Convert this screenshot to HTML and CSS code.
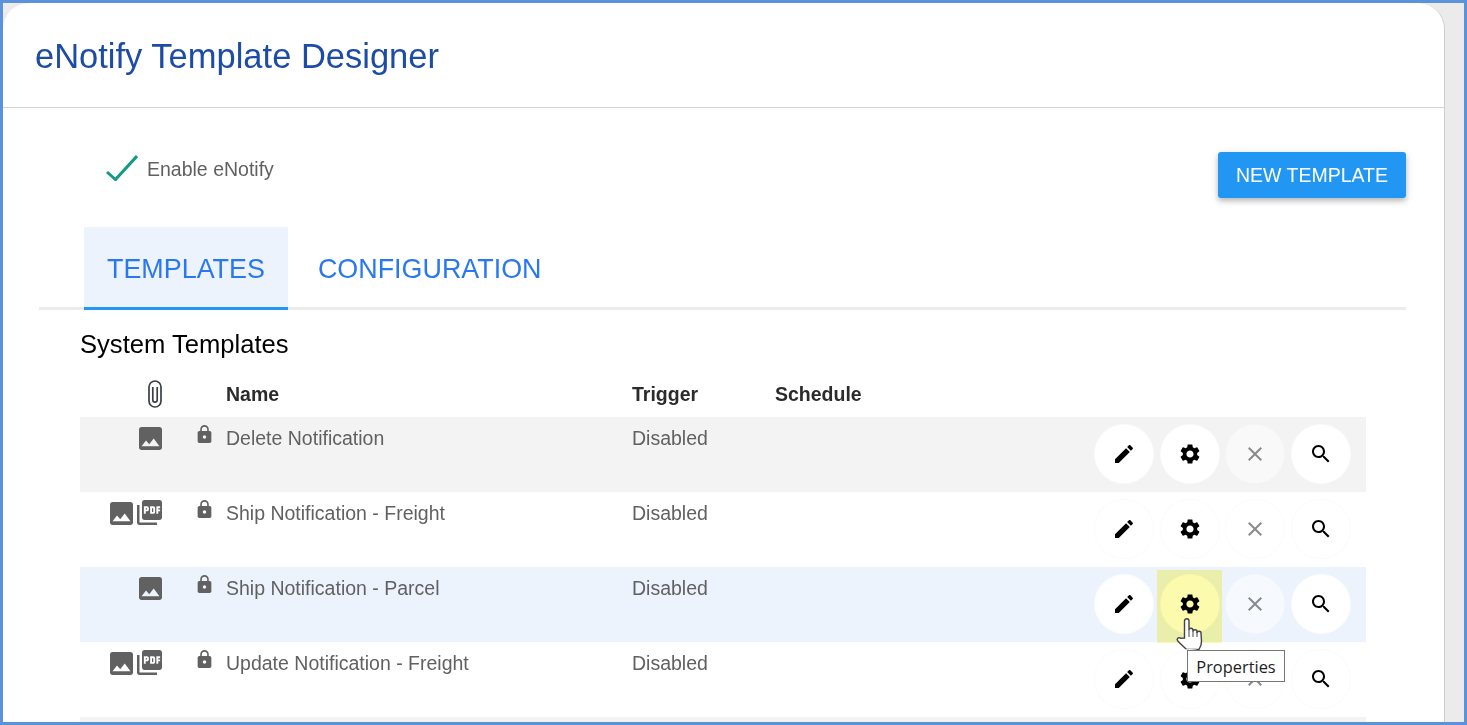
FILE: index.html
```html
<!DOCTYPE html>
<html lang="en">
<head>
    <meta charset="UTF-8">
    <meta name="viewport" content="width=device-width, initial-scale=1.0">
    <title>eNotify Template Designer</title>
    <link rel="stylesheet" href="styles.css">
</head>
<body>
    <svg class="icon-defs" aria-hidden="true">
        <symbol id="i-edit" viewBox="0 0 24 24"><path d="M3 17.25V21h3.75L17.81 9.94l-3.75-3.75L3 17.25zM20.71 7.04c.39-.39.39-1.02 0-1.41l-2.34-2.34c-.39-.39-1.02-.39-1.41 0l-1.83 1.83 3.75 3.75 1.83-1.83z"/></symbol>
        <symbol id="i-gear" viewBox="0 0 24 24"><path d="M19.14 12.94c.04-.3.06-.61.06-.94 0-.32-.02-.64-.07-.94l2.03-1.58c.18-.14.23-.41.12-.61l-1.92-3.32c-.12-.22-.37-.29-.59-.22l-2.39.96c-.5-.38-1.03-.7-1.62-.94l-.36-2.54c-.04-.24-.24-.41-.48-.41h-3.84c-.24 0-.43.17-.47.41l-.36 2.54c-.59.24-1.13.57-1.62.94l-2.39-.96c-.22-.08-.47 0-.59.22L2.74 8.87c-.12.21-.08.47.12.61l2.03 1.58c-.05.3-.09.63-.09.94s.02.64.07.94l-2.03 1.58c-.18.14-.23.41-.12.61l1.92 3.32c.12.22.37.29.59.22l2.39-.96c.5.38 1.03.7 1.62.94l.36 2.54c.05.24.24.41.48.41h3.84c.24 0 .44-.17.47-.41l.36-2.54c.59-.24 1.13-.56 1.62-.94l2.39.96c.22.08.47 0 .59-.22l1.92-3.32c.12-.22.07-.47-.12-.61l-2.01-1.58zM12 15.6c-1.98 0-3.6-1.62-3.6-3.6s1.62-3.6 3.6-3.6 3.6 1.62 3.6 3.6-1.62 3.6-3.6 3.6z"/></symbol>
        <symbol id="i-close" viewBox="0 0 24 24"><path d="M19 6.41L17.59 5 12 10.59 6.41 5 5 6.41 10.59 12 5 17.59 6.41 19 12 13.41 17.59 19 19 17.59 13.41 12z"/></symbol>
        <symbol id="i-search" viewBox="0 0 24 24"><path d="M15.5 14h-.79l-.28-.27C15.41 12.59 16 11.11 16 9.5 16 5.91 13.09 3 9.5 3S3 5.91 3 9.5 5.91 16 9.5 16c1.61 0 3.09-.59 4.23-1.57l.27.28v.79l5 4.99L20.49 19l-4.99-5zm-6 0C7.01 14 5 11.99 5 9.5S7.01 5 9.5 5 14 7.01 14 9.5 11.99 14 9.5 14z"/></symbol>
        <symbol id="i-image" viewBox="3 3 18 18"><path d="M21 19V5c0-1.1-.9-2-2-2H5c-1.1 0-2 .9-2 2v14c0 1.1.9 2 2 2h14c1.1 0 2-.9 2-2zM8.5 13.5l2.5 3.01L14.5 12l4.5 6H5l3.5-4.5z"/></symbol>
        <symbol id="i-pdf" viewBox="2 2 20 20"><path d="M20 2H8c-1.1 0-2 .9-2 2v12c0 1.1.9 2 2 2h12c1.1 0 2-.9 2-2V4c0-1.1-.9-2-2-2zm-8.5 7.5c0 .83-.67 1.5-1.5 1.5H9v2H7.5V7H10c.83 0 1.5.67 1.5 1.5v1zm5 2c0 .83-.67 1.5-1.5 1.5h-2.5V7H15c.83 0 1.5.67 1.5 1.5v3zm4-3H19v1h1.5V11H19v2h-1.5V7h3v1.5zM9 9.5h1v-1H9v1zM4 6H2v14c0 1.1.9 2 2 2h14v-2H4V6zm10 5.5h1v-3h-1v3z"/></symbol>
        <symbol id="i-lock" viewBox="4 1 16 21"><path d="M18 8h-1V6c0-2.76-2.24-5-5-5S7 3.24 7 6v2H6c-1.1 0-2 .9-2 2v10c0 1.1.9 2 2 2h12c1.1 0 2-.9 2-2V10c0-1.1-.9-2-2-2zm-6 9c-1.1 0-2-.9-2-2s.9-2 2-2 2 .9 2 2-.9 2-2 2zm3.1-9H8.9V6c0-1.71 1.39-3.1 3.1-3.1 1.71 0 3.1 1.39 3.1 3.1v2z"/></symbol>
    </svg>

    <div class="frame">
        <div class="card">
            <header class="card-header">
                <h1>eNotify Template Designer</h1>
            </header>

            <main class="card-body">
                <div class="top-row">
                    <div class="enable">
                        <svg class="check" viewBox="0 0 32 26"><path d="M1 17l8.500 7.500L31 1"/></svg>
                        <span>Enable eNotify</span>
                    </div>
                    <button class="new-btn">NEW TEMPLATE</button>
                </div>

                <nav class="tabs">
                    <a class="tab active">TEMPLATES</a>
                    <a class="tab">CONFIGURATION</a>
                </nav>

                <section class="templates">
                    <h2>System Templates</h2>

                    <div class="row head">
                        <div class="files">
                            <svg class="clip" viewBox="0 0 14 28"><path d="M1 7a6 6 0 0 1 12 0v14a6 6 0 0 1-12 0zM4.800 7v13a2.200 2.200 0 0 0 4.400 0V7"/></svg>
                        </div>
                        <div></div>
                        <div>Name</div>
                        <div>Trigger</div>
                        <div>Schedule</div>
                    </div>

                    <div class="row shaded">
                        <div class="files"><svg class="ic-image"><use href="#i-image"/></svg></div>
                        <div><svg class="ic-lock"><use href="#i-lock"/></svg></div>
                        <div>Delete Notification</div>
                        <div>Disabled</div>
                        <div></div>
                        <div class="actions">
                            <button class="act"><svg><use href="#i-edit"/></svg></button>
                            <button class="act"><svg><use href="#i-gear"/></svg></button>
                            <button class="act off"><svg><use href="#i-close"/></svg></button>
                            <button class="act"><svg><use href="#i-search"/></svg></button>
                        </div>
                    </div>

                    <div class="row">
                        <div class="files"><svg class="ic-image"><use href="#i-image"/></svg><svg class="ic-pdf"><use href="#i-pdf"/></svg></div>
                        <div><svg class="ic-lock"><use href="#i-lock"/></svg></div>
                        <div>Ship Notification - Freight</div>
                        <div>Disabled</div>
                        <div></div>
                        <div class="actions">
                            <button class="act"><svg><use href="#i-edit"/></svg></button>
                            <button class="act"><svg><use href="#i-gear"/></svg></button>
                            <button class="act off"><svg><use href="#i-close"/></svg></button>
                            <button class="act"><svg><use href="#i-search"/></svg></button>
                        </div>
                    </div>

                    <div class="row hover">
                        <div class="files"><svg class="ic-image"><use href="#i-image"/></svg></div>
                        <div><svg class="ic-lock"><use href="#i-lock"/></svg></div>
                        <div>Ship Notification - Parcel</div>
                        <div>Disabled</div>
                        <div></div>
                        <div class="actions">
                            <button class="act"><svg><use href="#i-edit"/></svg></button>
                            <button class="act marked">
                                <svg><use href="#i-gear"/></svg>
                                <span class="marker"></span>
                                <svg class="hand" viewBox="0 0 26 33">
                                    <path d="M8.500 20V3c0-3 4.500-3 4.500 0v9c0-2.400 4-2.400 4 .5v1c0-2.400 4-2.400 4 0V15c0-2.300 4-2.300 4 0l.5 8c.2 3.500-1 6-2.500 8.500H10.500C8 29 4.500 26 1.800 23c-1.800-2 .6-4.300 2.900-2.800z"/>
                                    <path class="hand-line" d="M13 12v7M17 13v6M21 14v5"/>
                                </svg>
                                <span class="tooltip">Properties</span>
                            </button>
                            <button class="act off"><svg><use href="#i-close"/></svg></button>
                            <button class="act"><svg><use href="#i-search"/></svg></button>
                        </div>
                    </div>

                    <div class="row">
                        <div class="files"><svg class="ic-image"><use href="#i-image"/></svg><svg class="ic-pdf"><use href="#i-pdf"/></svg></div>
                        <div><svg class="ic-lock"><use href="#i-lock"/></svg></div>
                        <div>Update Notification - Freight</div>
                        <div>Disabled</div>
                        <div></div>
                        <div class="actions">
                            <button class="act"><svg><use href="#i-edit"/></svg></button>
                            <button class="act"><svg><use href="#i-gear"/></svg></button>
                            <button class="act off"><svg><use href="#i-close"/></svg></button>
                            <button class="act"><svg><use href="#i-search"/></svg></button>
                        </div>
                    </div>

                    <div class="row shaded"></div>
                </section>
            </main>
        </div>
    </div>
</body>
</html>
```

FILE: styles.css
```css
* {
    box-sizing: border-box;
}

body {
    margin: 0;
    height: 725px;
    overflow: hidden;
    font-family: "Liberation Sans", Arial, Helvetica, sans-serif;
}

.icon-defs {
    display: none;
}

.frame {
    height: 725px;
    border: 3px solid #5a93dc;
    background-color: #ebebeb;
    overflow: hidden;
    padding-right: 19px;
}

.card {
    min-height: 800px;
    background-color: #fff;
    border-right: 1px solid #cfcfcf;
    border-radius: 26px 26px 0 0;
}

.card-header {
    height: 105px;
    padding: 31px 32px 0;
    border-bottom: 1px solid #d4d4d4;
}

h1 {
    margin: 0;
    font-size: 34.500px;
    line-height: 44px;
    font-weight: 400;
    color: #1c4ca6;
}

.card-body {
    padding: 0 38px 0 36px;
}

.top-row {
    display: flex;
    justify-content: space-between;
    align-items: flex-start;
    padding-top: 44px;
    margin-bottom: 29px;
}

.enable {
    display: flex;
    align-items: center;
    height: 34px;
    gap: 9px;
    margin-left: 67px;
    font-size: 19.500px;
    color: #616161;
}

.check {
    width: 32px;
    height: 26px;
    margin-top: -2px;
    fill: none;
    stroke: #129a85;
    stroke-width: 3;
}

.new-btn {
    width: 188px;
    height: 46px;
    border: none;
    border-radius: 3px;
    background-color: #2196f3;
    color: #fff;
    font-family: inherit;
    font-size: 19.500px;
    box-shadow: 0 3px 5px rgba(0, 0, 0, 0.2), 0 2px 10px rgba(0, 0, 0, 0.12);
    cursor: pointer;
}

.tabs {
    display: flex;
    height: 83px;
    padding-left: 45px;
    gap: 7px;
    border-bottom: 3px solid #ececec;
}

.tab {
    height: 83px;
    padding: 0 23px;
    font-size: 26.900px;
    line-height: 85px;
    color: #2a78f0;
}

.tab.active {
    background-color: #ecf3fd;
    border-bottom: 3px solid #2196f3;
}

.templates {
    padding: 0 40px 0 41px;
}

h2 {
    margin: 0;
    padding: 18px 0;
    font-size: 25.600px;
    line-height: 32px;
    font-weight: 400;
    color: #000;
}

.row {
    display: grid;
    grid-template-columns: 84px 62px 406px 143px 1fr auto;
    height: 75px;
    padding-top: 7px;
    font-size: 19.500px;
    line-height: 28px;
    color: #616161;
}

.row.head {
    height: 39px;
    padding-top: 2px;
    font-weight: 700;
    color: #2b2b2b;
}

.row.shaded {
    background-color: #f3f3f3;
}

.row.hover {
    background-color: #ecf3fd;
}

.files {
    display: flex;
    justify-content: flex-end;
    gap: 4px;
    padding: 3px 2px 0 0;
}

.clip {
    width: 14px;
    height: 28px;
    margin-top: -3px;
    fill: none;
    stroke: #3a3f48;
    stroke-width: 1.700;
}

.ic-image {
    width: 23px;
    height: 23px;
    fill: #616161;
}

.ic-pdf {
    width: 25px;
    height: 25px;
    margin-top: -2px;
    fill: #616161;
}

.ic-lock {
    display: block;
    width: 15px;
    height: 18px;
    margin: 1px 0 0 33px;
    fill: #616161;
}

.actions {
    display: flex;
    gap: 6px;
    padding-right: 15px;
}

.act {
    position: relative;
    width: 60px;
    height: 60px;
    padding: 0;
    border: 1px solid rgba(0, 0, 0, 0.015);
    border-radius: 50%;
    background-color: #fff;
    cursor: pointer;
}

.act svg {
    display: block;
    width: 24px;
    height: 24px;
    margin: 0 auto;
    fill: #000;
}

.act.off {
    margin-left: -1px;
    background-color: rgba(255, 255, 255, 0.5);
}

.act.off svg {
    fill: #8a8a8a;
}

/* yellow click highlight + cursor from the screenshot */
.marker {
    position: absolute;
    left: -4px;
    top: -5px;
    width: 65px;
    height: 73px;
    background-color: #fcfaac;
    mix-blend-mode: multiply;
}

.act .hand {
    position: absolute;
    left: 15px;
    top: 43px;
    width: 26px;
    height: 33px;
    fill: #fff;
    stroke: #444;
    stroke-width: 1.400;
    overflow: visible;
}

.hand-line {
    fill: none;
    stroke-width: 1;
}

.tooltip {
    position: absolute;
    left: 26px;
    top: 75px;
    width: 98px;
    height: 32px;
    border: 1px solid #767676;
    background-color: #fff;
    font-family: "Open Sans", "Noto Sans", sans-serif;
    font-size: 16.400px;
    line-height: 31px;
    color: #222;
    text-align: center;
    z-index: 2;
}
```
